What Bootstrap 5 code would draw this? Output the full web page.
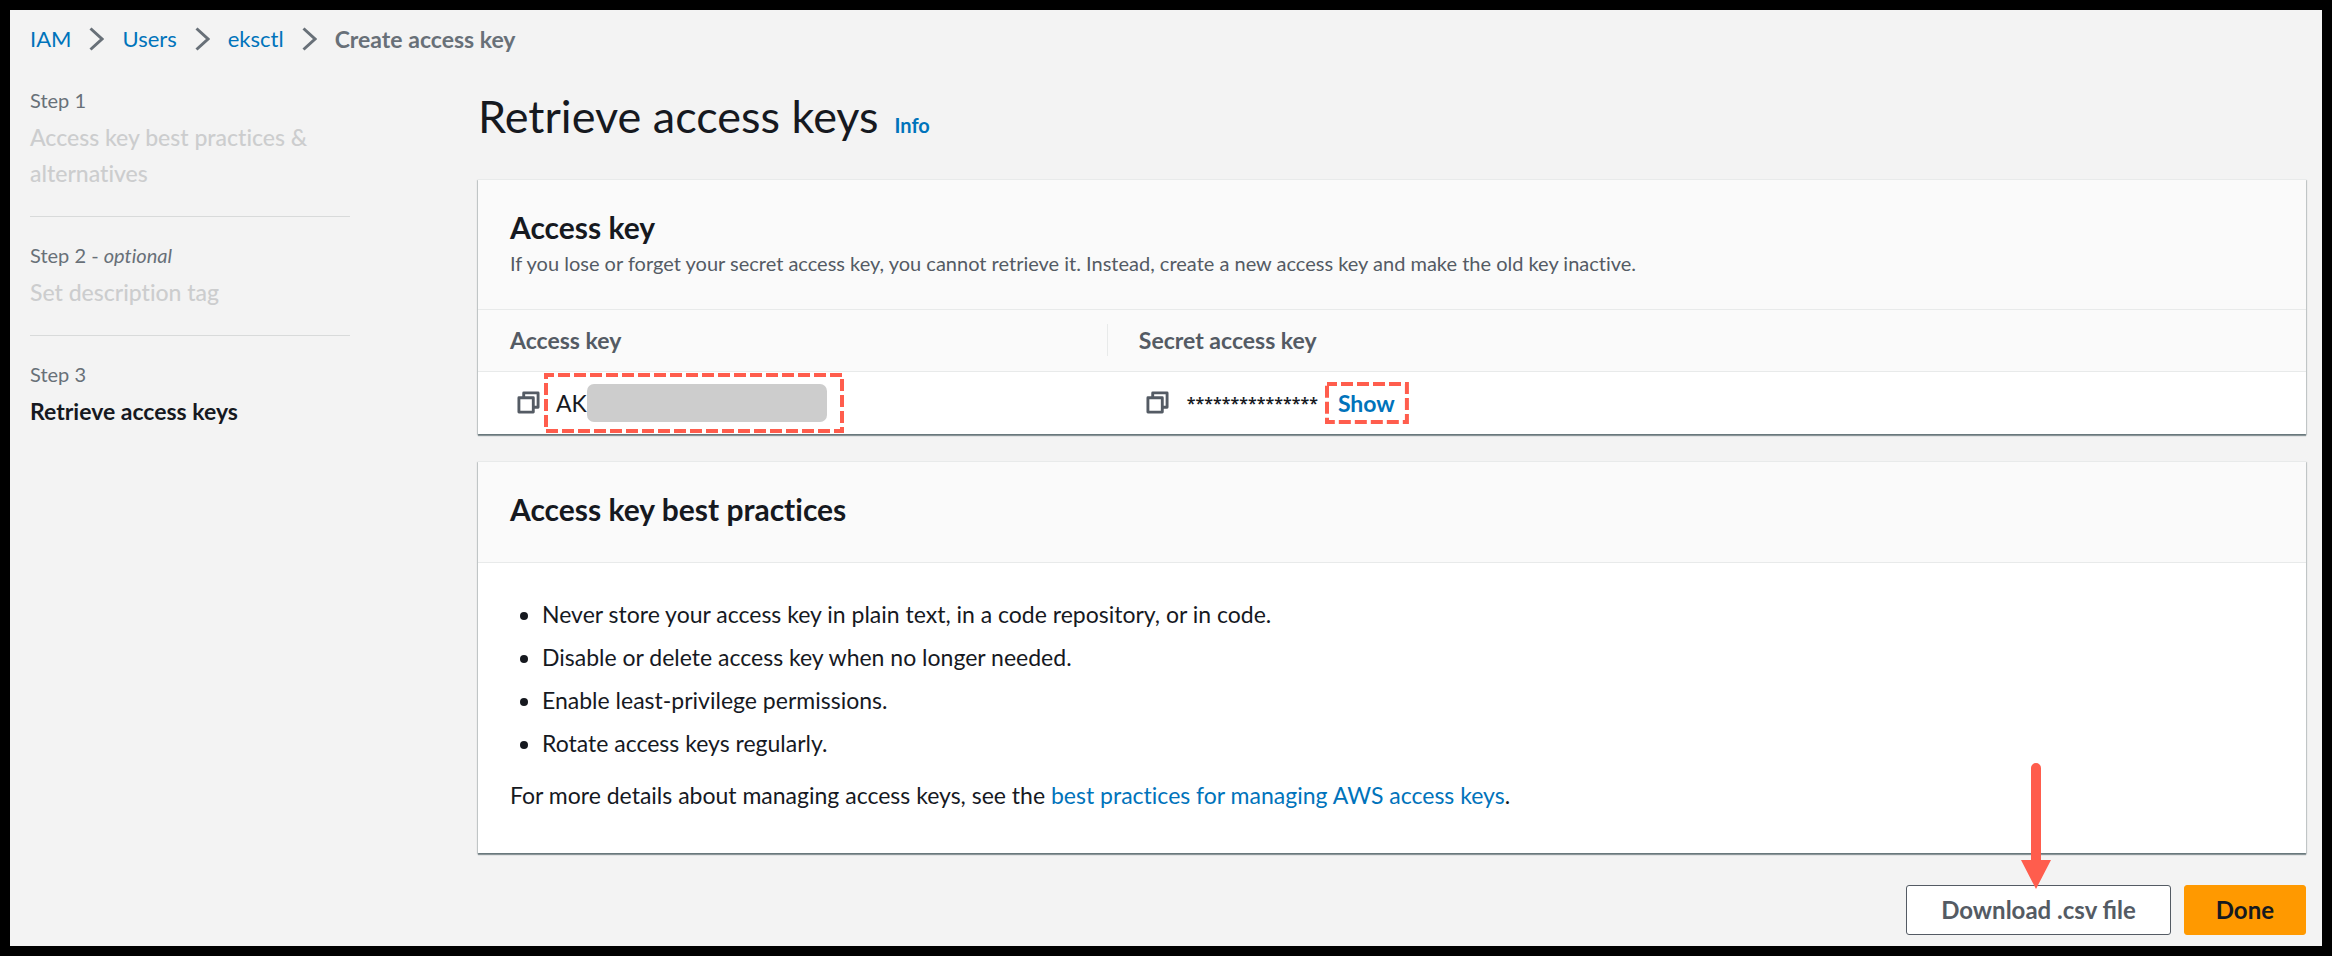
<!DOCTYPE html>
<html lang="en">
<head>
<meta charset="utf-8">
<meta name="viewport" content="width=device-width, initial-scale=1">
<title>Create access key | IAM</title>
<link href="https://cdn.jsdelivr.net/npm/bootstrap@5.3.0/dist/css/bootstrap.min.css" rel="stylesheet">
<style>
  :root { --ink: #16191f; --muted: #545b64; --soft: #687078; --line: #e8eaea; --blue: #0073bb; --callout: #ff5d4d; }
  body { font-family: Lato, "Noto Sans", sans-serif; font-variant-ligatures: none; font-size: 23px; line-height: 36px; color: var(--ink); background: #f3f3f3; border: 10px solid #000; min-height: 100vh; }
  a { color: var(--blue); text-decoration: none; }
  a:hover { text-decoration: underline; }
  .page { padding: 11px 16px 11px 20px; }

  .trail { gap: 18px; color: var(--soft); font-size: 22px; }
  .trail svg { width: 15px; height: 24px; fill: none; stroke: currentColor; stroke-width: 3; }
  .trail-current { font-size: 23px; font-weight: 700; }

  .layout { gap: 128px; }
  .wizard { flex: 0 0 320px; padding-top: 27px; }
  .wizard li + li { border-top: 1px solid #d8dada; padding-top: 22px; margin-top: 25px; }
  .step-label { font-size: 20px; line-height: 32px; color: var(--soft); margin-bottom: 3px; }
  .step-off { color: #cccdce; font-weight: 500; }

  .page-title { padding-top: 31px; margin-bottom: 35px; gap: 16px; }
  .page-title h1 { font-size: 45px; line-height: 56px; font-weight: 400; }
  .page-title a { font-size: 20px; font-weight: 700; }

  .panel { background: #fff; border-top: 1px solid var(--line); box-shadow: 0 2px 1px rgba(0,28,36,.4), 1px 1px 1px rgba(0,28,36,.15), -1px 1px 1px rgba(0,28,36,.15); }
  .panel + .panel { margin-top: 27px; }
  .panel-head { background: #fafafa; border-bottom: 1px solid var(--line); padding: 29px 32px 35px; }
  .panel-head h2 { font-size: 30px; line-height: 36px; font-weight: 700; }
  .panel-head.has-note { padding-bottom: 30px; }
  .panel-head p { font-size: 20px; line-height: 32px; color: var(--muted); margin: 2px 0 0; }

  .keys th, .keys td { padding: 0 32px; }
  .keys th { height: 61px; background: #fafafa; border-bottom: 1px solid var(--line); color: var(--muted); font-weight: 700; }
  .keys th:first-child { width: 34.4%; }
  .keys th + th { background: linear-gradient(var(--line), var(--line)) 0 50% / 1px 32px no-repeat #fafafa; }
  .keys td { height: 63px; }
  .copy { border: 0; background: none; padding: 0; margin-left: 7px; line-height: 0; }
  .copy svg { width: 23px; height: 23px; fill: none; stroke: var(--muted); stroke-width: 3; stroke-linejoin: round; }
  .callout { padding: 0 12px; }
  .callout svg { inset: 0; width: 100%; height: 100%; pointer-events: none; }
  .callout rect { x: 2px; y: 2px; width: calc(100% - 4px); height: calc(100% - 4px); fill: none; stroke: var(--callout); stroke-width: 4; stroke-dasharray: 12 4; stroke-dashoffset: 4; }
  .callout-key { width: 300px; height: 60px; margin-left: 4px; }
  .callout-show { height: 42px; margin-left: 7px; padding: 0 14px 0 13px; }
  .callout-show rect { stroke-dashoffset: 2; }
  .redacted { width: 240px; height: 38px; border-radius: 7px; background: #cdcdcd; }
  .masked { font-family: "Noto Sans", sans-serif; font-size: 16px; font-weight: 600; margin-left: 18px; }
  .show-key { border: 0; background: none; padding: 0; color: var(--blue); font-weight: 700; }

  .panel-text { padding: 33px 32px 40px; }
  .panel-text ul { padding-left: 32px; margin-bottom: 16px; }
  .panel-text li + li { margin-top: 7px; }

  .actions { margin-top: 32px; gap: 13px; }
  .actions .btn { font-size: 24px; line-height: 36px; font-weight: 700; border-width: 1px; border-radius: 3px; padding: 6px 31px; }
  .actions .btn-plain { padding: 6px 34px; }
  .btn-plain, .btn-plain:hover { color: var(--muted); background: #fff; border-color: var(--muted); }
  .btn-go, .btn-go:hover { color: var(--ink); background: #ff9900; border-color: #ff9900; }
  .arrow { width: 30px; height: 126px; left: 115px; bottom: 46px; fill: var(--callout); pointer-events: none; }
</style>
</head>
<body>
<div class="page">
  <nav aria-label="breadcrumb">
    <ol class="trail list-unstyled d-flex align-items-center mb-0">
      <li><a href="#">IAM</a></li>
      <li class="d-flex" aria-hidden="true"><svg viewBox="0 0 15 24"><path d="M1.500 1.500 13 12 1.500 22.500"/></svg></li>
      <li><a href="#">Users</a></li>
      <li class="d-flex" aria-hidden="true"><svg viewBox="0 0 15 24"><path d="M1.500 1.500 13 12 1.500 22.500"/></svg></li>
      <li><a href="#">eksctl</a></li>
      <li class="d-flex" aria-hidden="true"><svg viewBox="0 0 15 24"><path d="M1.500 1.500 13 12 1.500 22.500"/></svg></li>
      <li class="trail-current" aria-current="page">Create access key</li>
    </ol>
  </nav>

  <div class="layout d-flex">
    <aside class="wizard">
      <ol class="list-unstyled mb-0">
        <li><div class="step-label">Step 1</div><div class="step-off">Access key best practices &amp; alternatives</div></li>
        <li><div class="step-label">Step 2 - <em>optional</em></div><div class="step-off">Set description tag</div></li>
        <li><div class="step-label">Step 3</div><div class="fw-bold">Retrieve access keys</div></li>
      </ol>
    </aside>

    <main class="flex-grow-1">
      <div class="page-title d-flex align-items-baseline">
        <h1 class="mb-0">Retrieve access keys</h1>
        <a href="#">Info</a>
      </div>

      <section class="panel">
        <div class="panel-head has-note">
          <h2 class="mb-0">Access key</h2>
          <p>If you lose or forget your secret access key, you cannot retrieve it. Instead, create a new access key and make the old key inactive.</p>
        </div>
        <table class="keys w-100">
          <thead><tr><th scope="col">Access key</th><th scope="col">Secret access key</th></tr></thead>
          <tbody>
            <tr>
              <td>
                <div class="d-flex align-items-center">
                  <button type="button" class="copy" aria-label="Copy access key"><svg viewBox="0 0 24 24"><path d="M7 6V2h15v15h-4M2 7h15v15H2z"/></svg></button>
                  <span class="callout callout-key position-relative d-flex align-items-center">AK<span class="redacted"></span><svg class="position-absolute" aria-hidden="true"><rect/></svg></span>
                </div>
              </td>
              <td>
                <div class="d-flex align-items-center">
                  <button type="button" class="copy" aria-label="Copy secret access key"><svg viewBox="0 0 24 24"><path d="M7 6V2h15v15h-4M2 7h15v15H2z"/></svg></button>
                  <span class="masked">***************</span>
                  <span class="callout callout-show position-relative d-flex align-items-center"><button type="button" class="show-key">Show</button><svg class="position-absolute" aria-hidden="true"><rect/></svg></span>
                </div>
              </td>
            </tr>
          </tbody>
        </table>
      </section>

      <section class="panel">
        <div class="panel-head"><h2 class="mb-0">Access key best practices</h2></div>
        <div class="panel-text">
          <ul>
            <li>Never store your access key in plain text, in a code repository, or in code.</li>
            <li>Disable or delete access key when no longer needed.</li>
            <li>Enable least-privilege permissions.</li>
            <li>Rotate access keys regularly.</li>
          </ul>
          <p class="mb-0">For more details about managing access keys, see the <a href="#">best practices for managing AWS access keys</a>.</p>
        </div>
      </section>

      <div class="actions d-flex justify-content-end">
        <div class="position-relative">
          <button type="button" class="btn btn-plain">Download .csv file</button>
          <svg class="arrow position-absolute" viewBox="0 0 30 126" aria-hidden="true"><path d="M10 5a5 5 0 0 1 10 0v92h10L15 126 0 97h10z"/></svg>
        </div>
        <button type="button" class="btn btn-go">Done</button>
      </div>
    </main>
  </div>
</div>
<script src="https://cdn.jsdelivr.net/npm/bootstrap@5.3.0/dist/js/bootstrap.bundle.min.js"></script>
</body>
</html>
